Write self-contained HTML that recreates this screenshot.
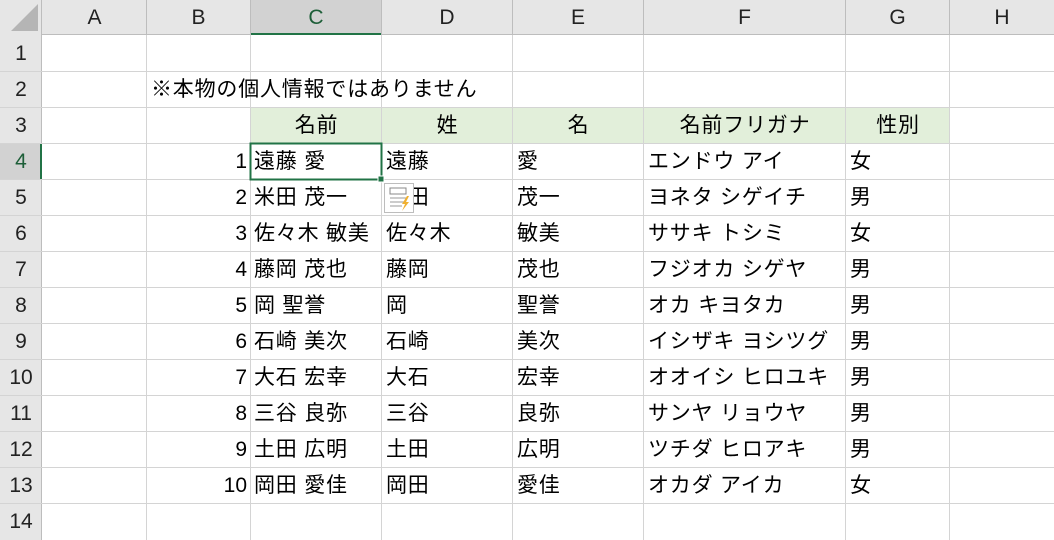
<!DOCTYPE html>
<html><head><meta charset="utf-8"><style>
body{margin:0;width:1054px;height:540px;overflow:hidden;background:#fff;font-family:"Liberation Sans","Noto Sans CJK JP",sans-serif;}
.a{position:absolute;box-sizing:border-box;}
.t{position:absolute;font-size:21px;letter-spacing:0.8px;line-height:36px;white-space:nowrap;color:#000;padding-top:1px;}
.h{position:absolute;font-size:21px;line-height:36px;white-space:nowrap;}
</style></head><body>
<div class="a" style="left:0;top:0;width:1054px;height:35px;background:#e6e6e6;border-bottom:1px solid #bdbdbd"></div>
<div class="a" style="left:0;top:0;width:42px;height:540px;background:#e6e6e6;border-right:1px solid #bdbdbd"></div>
<svg class="a" style="left:0;top:0" width="42" height="35"><polygon points="38,4 38,31 11,31" fill="#b5b5b5"/></svg>
<div class="a" style="left:251px;top:0;width:131px;height:35px;background:#d2d2d2;border-bottom:2px solid #217346"></div>
<div class="a" style="left:0;top:143px;width:42px;height:36px;background:#d2d2d2;border-right:2px solid #217346"></div>
<div class="a" style="left:251px;top:107px;width:699px;height:36px;background:#e2efda"></div>
<svg class="a" style="left:0;top:0" width="1054" height="540">
<g stroke="#d4d4d4" stroke-width="1">
<line x1="146.5" y1="0" x2="146.5" y2="540"/><line x1="250.5" y1="0" x2="250.5" y2="540"/><line x1="381.5" y1="0" x2="381.5" y2="540"/><line x1="512.5" y1="0" x2="512.5" y2="540"/><line x1="643.5" y1="0" x2="643.5" y2="540"/><line x1="845.5" y1="0" x2="845.5" y2="540"/><line x1="949.5" y1="0" x2="949.5" y2="540"/>
<line x1="0" y1="71.5" x2="1054" y2="71.5"/><line x1="0" y1="107.5" x2="1054" y2="107.5"/><line x1="0" y1="143.5" x2="1054" y2="143.5"/><line x1="0" y1="179.5" x2="1054" y2="179.5"/><line x1="0" y1="215.5" x2="1054" y2="215.5"/><line x1="0" y1="251.5" x2="1054" y2="251.5"/><line x1="0" y1="287.5" x2="1054" y2="287.5"/><line x1="0" y1="323.5" x2="1054" y2="323.5"/><line x1="0" y1="359.5" x2="1054" y2="359.5"/><line x1="0" y1="395.5" x2="1054" y2="395.5"/><line x1="0" y1="431.5" x2="1054" y2="431.5"/><line x1="0" y1="467.5" x2="1054" y2="467.5"/><line x1="0" y1="503.5" x2="1054" y2="503.5"/>
</g>
<g stroke="#bdbdbd"><line x1="146.5" y1="0" x2="146.5" y2="35"/><line x1="250.5" y1="0" x2="250.5" y2="35"/><line x1="381.5" y1="0" x2="381.5" y2="35"/><line x1="512.5" y1="0" x2="512.5" y2="35"/><line x1="643.5" y1="0" x2="643.5" y2="35"/><line x1="845.5" y1="0" x2="845.5" y2="35"/><line x1="949.5" y1="0" x2="949.5" y2="35"/></g>
<rect x="250.5" y="143.5" width="131" height="36" fill="none" stroke="#217346" stroke-width="2"/>
<rect x="378" y="176" width="6" height="6" fill="#217346" stroke="#fff"/>
</svg>
<div id="c"></div>
<svg class="a" style="left:384px;top:183px" width="31" height="31">
<rect x="0.5" y="0.5" width="29" height="29" fill="#fff" stroke="#bdbdbd"/>
<rect x="6" y="5" width="16" height="6" fill="#fff" stroke="#888"/>
<line x1="6" y1="15" x2="22" y2="15" stroke="#999"/><line x1="6" y1="19" x2="22" y2="19" stroke="#999"/><line x1="6" y1="23" x2="18" y2="23" stroke="#999"/>
<polygon points="23,13 18,21 21,21 18,28 25,19 22,19 25,13" fill="#f0b030"/>
</svg>
<script>
var h='';
var cols=[["A",43,146],["B",147,250],["C",251,381],["D",382,512],["E",513,643],["F",644,845],["G",846,949],["H",950,1054]];
cols.forEach(function(c){h+='<div class="h" style="left:'+c[1]+'px;width:'+(c[2]-c[1])+'px;top:0;line-height:35px;text-align:center;color:'+(c[0]=="C"?"#1d5e38":"#222")+'">'+c[0]+'</div>';});
for(var r=1;r<=14;r++){h+='<div class="h" style="left:0;width:42px;text-align:center;top:'+(36+(r-1)*36)+'px;color:'+(r==4?"#1d5e38":"#222")+'">'+r+'</div>';}
function t(x,y,s,extra){h+='<div class="t" style="left:'+x+'px;top:'+y+'px;'+(extra||'')+'">'+s+'</div>';}
t(151,71,"※本物の個人情報ではありません");
var hd=[["名前",251,131],["姓",382,131],["名",513,131],["名前フリガナ",644,202],["性別",846,104]];
hd.forEach(function(c){h+='<div class="t" style="left:'+c[1]+'px;width:'+c[2]+'px;top:107px;text-align:center">'+c[0]+'</div>';});
var d=[["遠藤 愛","遠藤","愛","エンドウ アイ","女"],["米田 茂一","米田","茂一","ヨネタ シゲイチ","男"],["佐々木 敏美","佐々木","敏美","ササキ トシミ","女"],["藤岡 茂也","藤岡","茂也","フジオカ シゲヤ","男"],["岡 聖誉","岡","聖誉","オカ キヨタカ","男"],["石崎 美次","石崎","美次","イシザキ ヨシツグ","男"],["大石 宏幸","大石","宏幸","オオイシ ヒロユキ","男"],["三谷 良弥","三谷","良弥","サンヤ リョウヤ","男"],["土田 広明","土田","広明","ツチダ ヒロアキ","男"],["岡田 愛佳","岡田","愛佳","オカダ アイカ","女"]];
d.forEach(function(r,i){var y=143+i*36;
h+='<div class="h" style="left:147px;width:100px;text-align:right;top:'+(y+1)+'px">'+(i+1)+'</div>';
t(254,y,r[0]);t(386,y,r[1]);t(517,y,r[2]);t(648,y,r[3]);t(850,y,r[4]);});
document.getElementById('c').innerHTML=h;
</script>
</body></html>
